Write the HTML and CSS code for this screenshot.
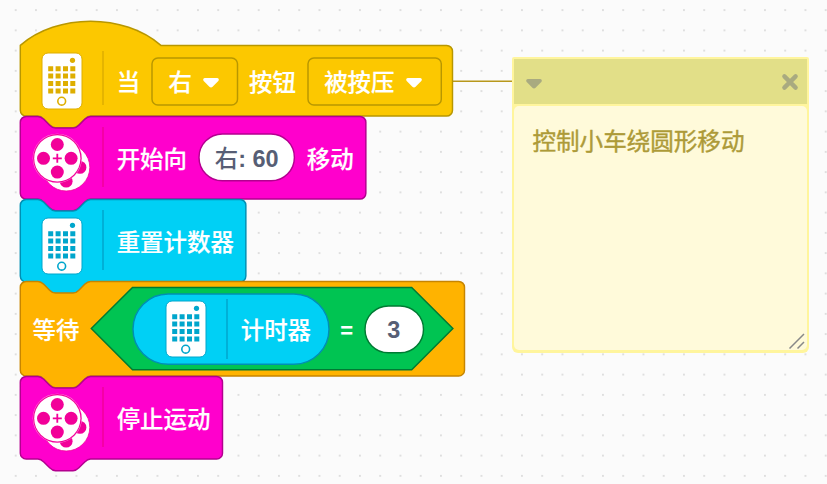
FILE: index.html
```
<!DOCTYPE html>
<html lang="zh-CN">
<head>
<meta charset="utf-8">
<title>积木工作区</title>
<link rel="stylesheet" href="styles.css">
</head>
<body>
<svg class="defs" width="0" height="0" aria-hidden="true">
  <defs>
    <pattern id="dots" x="14.75" y="9.15" width="20.25" height="20.25" patternUnits="userSpaceOnUse">
      <rect width="1.9" height="1.9" fill="#dedede"/>
    </pattern>
    <symbol id="phone" viewBox="0 0 42 58">
      <rect x="1" y="1" width="40" height="56" rx="6" fill="#fff" stroke="currentColor" stroke-width="1"/>
      <circle cx="31.500" cy="8.3" r="2.6" fill="currentColor"/>
      <path fill="currentColor" d="M7.2 14.2h5v5h-5zM14.6 14.2h5v5h-5zM22 14.2h5v5h-5zM29.3 14.2h5v5h-5zM7.2 21.6h5v5h-5zM14.6 21.6h5v5h-5zM22 21.6h5v5h-5zM29.3 21.6h5v5h-5zM7.2 29h5v5h-5zM14.6 29h5v5h-5zM22 29h5v5h-5zM29.3 29h5v5h-5zM7.2 36.4h5v5h-5zM14.6 36.4h5v5h-5zM22 36.4h5v5h-5zM29.3 36.4h5v5h-5z"/>
      <circle cx="20.7" cy="49.2" r="3.9" fill="none" stroke="currentColor" stroke-width="1.6"/>
    </symbol>
    <symbol id="reels" viewBox="0 0 60 60">
      <circle cx="34.2" cy="34.4" r="23.6" fill="#fff" stroke="currentColor" stroke-width=".8"/>
      <g fill="currentColor">
        <circle cx="48" cy="34.4" r="6.4"/>
        <circle cx="34.2" cy="48.2" r="6.4"/>
      </g>
      <circle cx="25.3" cy="25.3" r="24.6" fill="#ff8fe0"/>
      <circle cx="25.3" cy="25.3" r="24.2" fill="currentColor"/>
      <circle cx="25.3" cy="25.3" r="23.1" fill="#fff"/>
      <g fill="currentColor">
        <circle cx="25.3" cy="11.5" r="6.5"/>
        <circle cx="39.1" cy="25.3" r="6.5"/>
        <circle cx="25.3" cy="39.1" r="6.5"/>
        <circle cx="11.5" cy="25.3" r="6.5"/>
        <path d="M24.4 20.8h1.8v3.6h3.6v1.8h-3.6v3.6h-1.8v-3.6h-3.6v-1.8h3.6z"/>
      </g>
    </symbol>
    <symbol id="arrow" viewBox="0 0 18 14">
      <path d="M3 2h12c1.700 0 2.400 1.700 1.300 2.900l-5.700 5.800c-.9.9-2.300.9-3.200 0L1.700 4.900C.6 3.700 1.300 2 3 2z"/>
    </symbol>
  </defs>
</svg>

<main class="workspace">
  <svg class="grid" width="827" height="484"><rect width="827" height="484" fill="url(#dots)"/></svg>

  <svg class="connector" width="64" height="4"><path d="M0 2.300h64"/></svg>

  <section class="block event">
    <svg class="shape" width="440" height="84">
      <path d="M0 0C36.600-32.200 104-32.200 140.600 0H426.350a5.850 5.850 0 0 1 5.850 5.850V64.850a5.850 5.850 0 0 1-5.850 5.850H70.300c-2.900 0-4.400 1.460-5.850 2.900l-5.850 5.850c-1.460 1.460-2.900 2.900-5.850 2.900H35.200c-2.900 0-4.400-1.460-5.850-2.900l-5.850-5.850c-1.460-1.460-2.900-2.900-5.850-2.900H5.850A5.850 5.850 0 0 1 0 64.850Z"/>
    </svg>
    <svg class="phone"><use href="#phone"/></svg>
    <i class="sep"></i>
    <span class="label">当</span>
    <span class="drop drop-side"><svg class="outline"><rect width="100%" height="100%" rx="5.850"/></svg><span class="value">右</span><svg class="arrow"><use href="#arrow"/></svg></span>
    <span class="label">按钮</span>
    <span class="drop drop-state"><svg class="outline"><rect width="100%" height="100%" rx="5.850"/></svg><span class="value">被按压</span><svg class="arrow"><use href="#arrow"/></svg></span>
  </section>

  <section class="block motion move">
    <svg class="shape" width="360" height="96">
      <path d="M0 5.850A5.850 5.850 0 0 1 5.850 0H17.600c2.900 0 4.400 1.460 5.850 2.900l5.850 5.850c1.460 1.460 2.900 2.900 5.850 2.900h17.600c2.900 0 4.400-1.460 5.850-2.900l5.850-5.850c1.460-1.460 2.900-2.900 5.850-2.900H339.700a5.850 5.850 0 0 1 5.850 5.850V76.850a5.850 5.850 0 0 1-5.850 5.850H70.300c-2.900 0-4.400 1.460-5.850 2.900l-5.850 5.850c-1.460 1.460-2.900 2.900-5.850 2.900H35.200c-2.900 0-4.400-1.460-5.850-2.900l-5.850-5.850c-1.460-1.460-2.900-2.900-5.850-2.900H5.850A5.850 5.850 0 0 1 0 76.850Z"/>
    </svg>
    <svg class="reels"><use href="#reels"/></svg>
    <i class="sep"></i>
    <span class="label">开始向</span>
    <span class="pill pill-wide"><svg class="outline"><rect width="100%" height="100%" rx="23.400"/></svg><span class="value">右<b>: 60</b></span></span>
    <span class="label">移动</span>
  </section>

  <section class="block sensing reset">
    <svg class="shape" width="240" height="96">
      <path d="M0 5.850A5.850 5.850 0 0 1 5.850 0H17.600c2.900 0 4.400 1.460 5.850 2.900l5.850 5.850c1.460 1.460 2.900 2.900 5.850 2.900h17.600c2.900 0 4.400-1.460 5.850-2.900l5.850-5.850c1.460-1.460 2.900-2.900 5.850-2.900H219.700a5.850 5.850 0 0 1 5.850 5.850V76.650a5.850 5.850 0 0 1-5.850 5.850H70.300c-2.900 0-4.400 1.460-5.850 2.900l-5.850 5.850c-1.460 1.460-2.900 2.900-5.850 2.900H35.200c-2.900 0-4.400-1.460-5.850-2.900l-5.850-5.850c-1.460-1.460-2.900-2.900-5.850-2.900H5.850A5.850 5.850 0 0 1 0 76.650Z"/>
    </svg>
    <svg class="phone"><use href="#phone"/></svg>
    <i class="sep"></i>
    <span class="label">重置计数器</span>
  </section>

  <section class="block control">
    <svg class="shape" width="460" height="110">
      <path d="M0 5.850A5.850 5.850 0 0 1 5.850 0H17.600c2.900 0 4.400 1.460 5.850 2.900l5.850 5.850c1.460 1.460 2.900 2.900 5.850 2.900h17.600c2.900 0 4.400-1.460 5.850-2.900l5.850-5.850c1.460-1.460 2.900-2.900 5.850-2.900H438.350a5.850 5.850 0 0 1 5.850 5.850V88.750a5.850 5.850 0 0 1-5.850 5.850H70.300c-2.900 0-4.400 1.460-5.850 2.900l-5.850 5.850c-1.460 1.460-2.900 2.900-5.850 2.900H35.200c-2.900 0-4.400-1.460-5.850-2.900l-5.850-5.850c-1.460-1.460-2.900-2.900-5.850-2.900H5.850A5.850 5.850 0 0 1 0 88.750Z"/>
    </svg>
    <span class="label">等待</span>
    <div class="operator">
      <svg class="shape" width="364" height="84"><path d="M41.200 0H320.400L361.600 41.200L320.400 82.400H41.200L0 41.200Z"/></svg>
      <div class="reporter sensing">
        <svg class="outline"><rect width="100%" height="100%" rx="35.100"/></svg>
        <svg class="phone"><use href="#phone"/></svg>
        <i class="sep"></i>
        <span class="label">计时器</span>
      </div>
      <span class="equals">=</span>
      <span class="pill pill-number"><svg class="outline"><rect width="100%" height="100%" rx="23.400"/></svg><span class="value">3</span></span>
    </div>
  </section>

  <section class="block motion stop">
    <svg class="shape" width="210" height="96">
      <path d="M0 5.850A5.850 5.850 0 0 1 5.850 0H17.600c2.900 0 4.400 1.460 5.850 2.900l5.850 5.850c1.460 1.460 2.900 2.900 5.850 2.900h17.600c2.900 0 4.400-1.460 5.850-2.900l5.850-5.850c1.460-1.460 2.900-2.900 5.850-2.900H196.350a5.850 5.850 0 0 1 5.850 5.850V76.750a5.850 5.850 0 0 1-5.850 5.850H70.300c-2.900 0-4.400 1.460-5.850 2.900l-5.850 5.850c-1.460 1.460-2.900 2.900-5.850 2.900H35.200c-2.900 0-4.400-1.460-5.850-2.900l-5.850-5.850c-1.460-1.460-2.900-2.900-5.850-2.900H5.850A5.850 5.850 0 0 1 0 76.750Z"/>
    </svg>
    <svg class="reels"><use href="#reels"/></svg>
    <i class="sep"></i>
    <span class="label">停止运动</span>
  </section>

  <aside class="note">
    <header class="note-bar">
      <svg class="arrow"><use href="#arrow"/></svg>
      <svg class="close" viewBox="0 0 18 18"><path d="M3.400 3.400l11.200 11.200M14.600 3.400L3.400 14.600"/></svg>
    </header>
    <div class="note-body">
      <p class="note-text">控制小车绕圆形移动</p>
      <svg class="resize" viewBox="0 0 18 18"><path d="M1.500 16.500l14.500-14.500M9.500 16.500l6.500-6.500"/></svg>
    </div>
  </aside>
</main>
</body>
</html>
```
FILE: styles.css
```
* { box-sizing: border-box; }

body {
  margin: 0;
  background: #fbfbfb;
  font-family: "Liberation Sans", "Noto Sans CJK SC", sans-serif;
}

svg { flex: none; display: block; }
.defs { position: absolute; }

.workspace {
  position: relative;
  width: 827px;
  height: 484px;
  overflow: hidden;
}

.grid { position: absolute; inset: 0; }

.connector {
  position: absolute;
  left: 450px;
  top: 79px;
  stroke: #b8981c;
  stroke-width: 1.460;
}

/* Blocks on the canvas */
.block {
  position: absolute;
  left: 20px;
  display: flex;
  align-items: center;
  color: #fff;
  font-size: 23.450px;
  font-weight: 500;
  line-height: 30px;
  white-space: nowrap;
}

.shape, .outline {
  position: absolute;
  left: 0;
  top: 0;
  overflow: visible;
  fill: var(--fill);
  stroke: var(--line);
  stroke-width: 1.460;
}
.shape path { transform: translate(.3px, .4px); }
.outline { width: 100%; height: 100%; }

.label, .drop, .pill, .equals, .phone, .reels, .sep, .value, .arrow { position: relative; flex: none; }
.label, .drop .value {
  font-family: "Noto Sans CJK SC", sans-serif;
  -webkit-text-stroke: .2px currentColor;
}

.event { --fill: #fcc800; --line: #b89700; --icon: #deae00; top: 45.300px; height: 70.700px; z-index: 1; }
.motion { --fill: #ff00cc; --line: #b3008f; --icon: #f20099; height: 82.700px; }
.sensing { --fill: #00d0f5; --line: #008fb3; --icon: #00a6cc; }
.control { --fill: #ffb300; --line: #c78500; top: 281.300px; height: 95.200px; z-index: 4; }
.move { top: 116px; z-index: 2; }
.reset { top: 198.700px; height: 82.500px; z-index: 3; }
.stop { top: 376px; z-index: 5; }

.phone {
  width: 42px;
  height: 58px;
  margin-left: 21px;
  color: var(--icon);
}
.reset .phone { margin-top: 12px; }
.move .label, .stop .label { margin-top: 1px; }
.reset .label { margin-top: 2px; }

.reels {
  width: 60px;
  height: 60px;
  margin-left: 12px;
  margin-top: 12px;
  color: var(--icon);
}

.sep {
  width: 1.460px;
  height: 60px;
  background: var(--icon);
  opacity: .75;
}
.event .sep { height: 54px; margin-top: -5px; }
.phone + .sep { margin-left: 19.300px; }
.reels + .sep { margin-left: 10.300px; }
.sep + .label { margin-left: 12.900px; }

.drop {
  display: flex;
  align-items: center;
  justify-content: space-between;
  top: .5px;
  height: 47px;
  padding: 0 18px 0 16.500px;
}
.drop-side { width: 85.500px; margin: 0 11.500px 0 12px; }
.drop-state { width: 133.300px; margin-left: 11.700px; }

.arrow { width: 18px; height: 14px; fill: #fff; }
.drop .arrow { top: 1.500px; }

.pill {
  --fill: #fff;
  display: flex;
  align-items: center;
  justify-content: center;
  top: .5px;
  height: 46.800px;
  color: #575e75;
  font-weight: 700;
}
.pill-wide { width: 95.400px; margin: 0 12.500px 0 12px; font-weight: 500; }
.pill-wide .value { top: 1px; }

.control > .label { margin-left: 12.500px; }

.operator {
  --fill: #00c452;
  --line: #007a33;
  position: relative;
  display: flex;
  align-items: center;
  width: 361.600px;
  height: 82.400px;
  margin-left: 11.700px;
  padding-left: 41.500px;
}
.operator > .shape { top: -.5px; }

.reporter {
  position: relative;
  display: flex;
  align-items: center;
  width: 196px;
  height: 70.300px;
}
.reporter .phone { margin-left: 32px; }
.reporter .sep { margin-left: 19.800px; }

.equals {
  width: 36px;
  text-align: center;
  font-size: 22px;
  font-weight: 700;
  top: 2px;
}
.pill-number { width: 58.500px; }
.pill-number .value { top: 1px; }

/* Workspace comment */
.note {
  position: absolute;
  left: 512px;
  top: 57px;
  width: 297px;
  height: 296px;
  display: flex;
  flex-direction: column;
  padding: 1.500px 2px 3px;
  border-radius: 2px 2px 6px 6px;
  background: #fff59d;
}
.note-bar {
  display: flex;
  align-items: center;
  justify-content: space-between;
  height: 45.500px;
  padding: 2px 8px 0 11px;
  background: #e2df88;
}
.note-bar .arrow { fill: #a9aa80; top: 1.500px; }
.close {
  width: 18px;
  height: 18px;
  fill: none;
  stroke: #a9aa80;
  stroke-width: 4.400;
  stroke-linecap: round;
}
.note-body {
  flex: 1;
  display: flex;
  flex-direction: column;
  justify-content: space-between;
  margin-top: 2px;
  padding: 19px 1px 0 18.500px;
  border-radius: 5px;
  background: #fffada;
}
.note-text {
  margin: 0;
  color: #ad9a38;
  font: 400 23.550px/30px "Noto Sans CJK SC", sans-serif;
  -webkit-text-stroke: .4px currentColor;
}
.resize {
  align-self: flex-end;
  width: 18px;
  height: 18px;
  fill: none;
  stroke: #888;
  stroke-width: 1.500;
}
```
